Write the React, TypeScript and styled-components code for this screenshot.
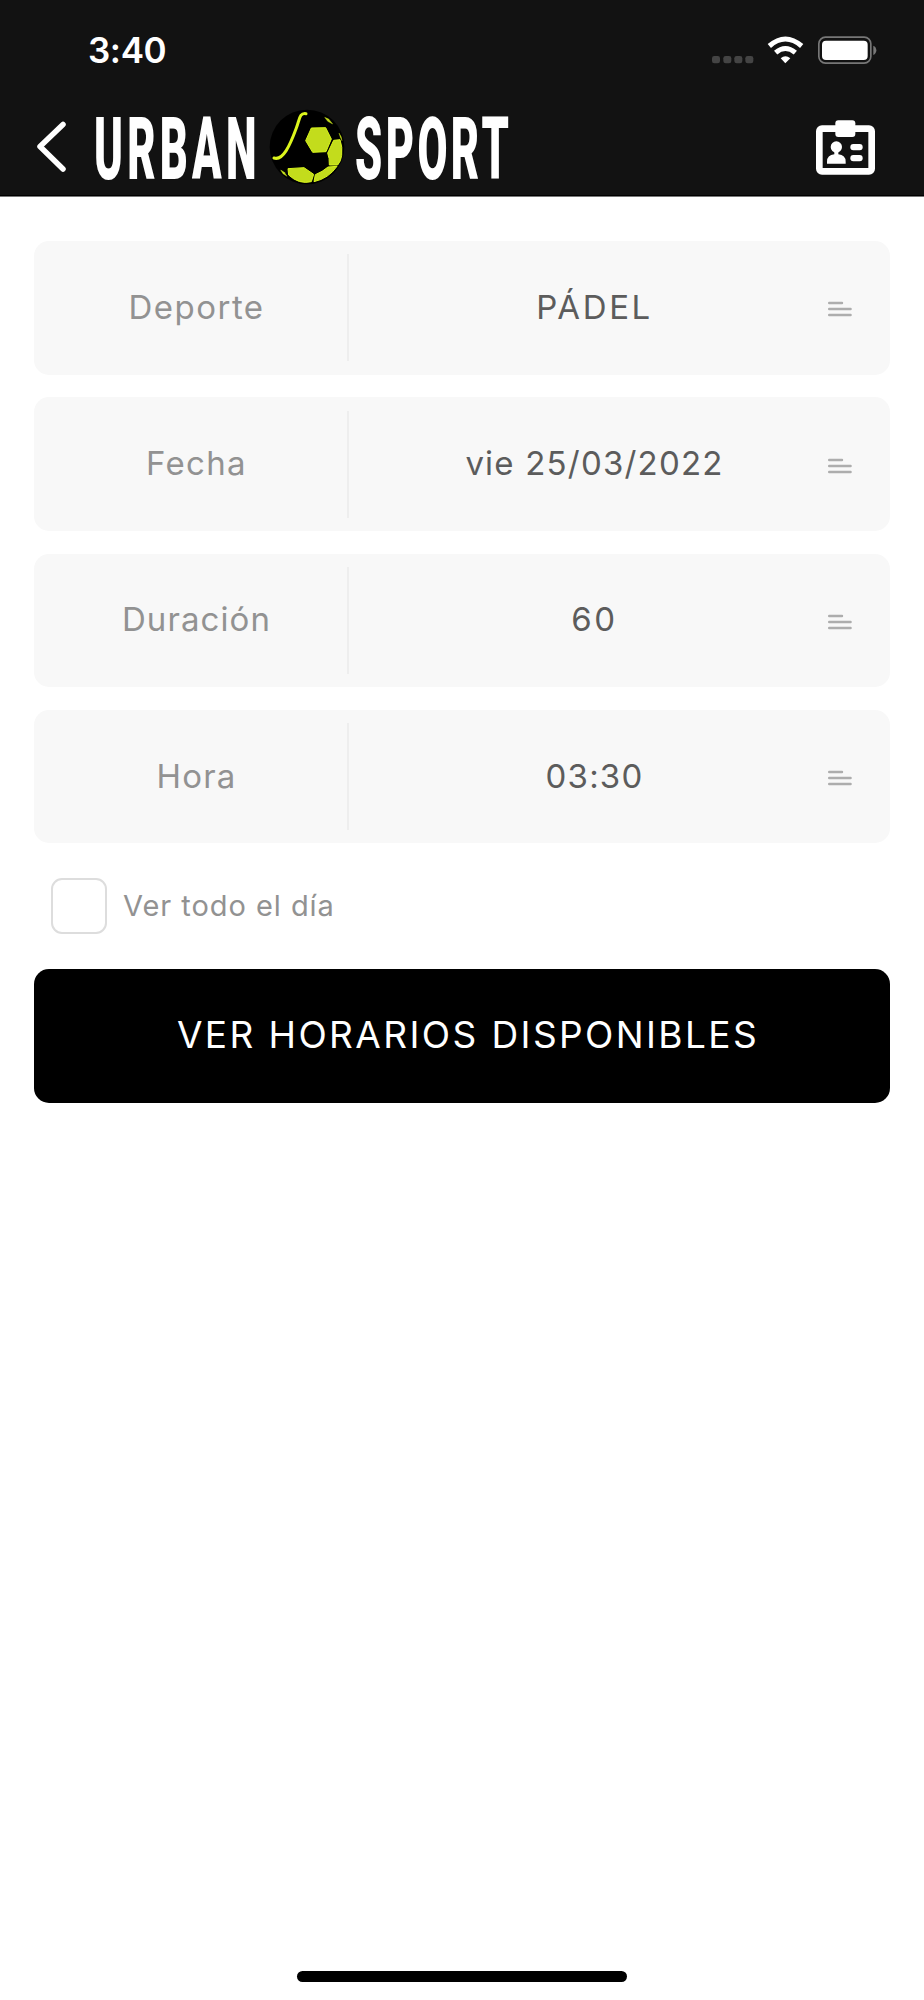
import React from 'react';
import styled, { createGlobalStyle } from 'styled-components';

const GlobalStyle = createGlobalStyle`
  *, *::before, *::after { box-sizing: border-box; }
  html, body { margin: 0; padding: 0; background: #fff; }
  body { font-family: Inter, "Liberation Sans", sans-serif; }
  button { font: inherit; border: 0; padding: 0; background: none; }
`;

const Screen = styled.div`
  width: 924px;
  height: 2000px;
  display: flex;
  flex-direction: column;
  background: #fff;
  overflow: hidden;
`;

const Header = styled.header`
  height: 197px;
  flex: none;
  background: #121212;
  border-bottom: 1px solid #777;
  box-shadow: inset 0 -1px 0 #000;
`;

const StatusBar = styled.div`
  height: 100px;
  padding: 0 45px 0 88px;
  display: flex;
  justify-content: space-between;
  align-items: center;
`;

const Clock = styled.time`
  color: #fff;
  font-size: 35px;
  line-height: 40px;
  font-weight: 600;
  letter-spacing: -0.4px;
`;

const NavBar = styled.nav`
  height: 96px;
  padding: 0 45px 0 34px;
  display: flex;
  align-items: center;
`;

const BackButton = styled.button`
  width: 36px;
  height: 60px;
  flex: none;
`;

const Logo = styled.div`
  margin-left: 24px;
  height: 86px;
  display: flex;
  align-items: center;
  flex: none;
`;

const LogoWord = styled.svg`
  display: block;
  overflow: visible;
  font-family: Roboto, sans-serif;
  font-weight: 900;
  font-size: 87px;
  fill: #fff;
`;

const Ball = styled.svg`
  display: block;
  margin: 0 10px 2px 12px;
`;

const CardButton = styled.button`
  width: 66px;
  height: 60px;
  margin-left: auto;
`;

const Form = styled.main`
  flex: 1;
  padding: 44px 34px 0;
  display: flex;
  flex-direction: column;
`;

const Fields = styled.div`
  display: flex;
  flex-direction: column;
  gap: 22.7px;
`;

const Field = styled.div`
  height: 133.6px;
  border-radius: 15px;
  background: #f8f8f8;
  display: flex;
  align-items: center;
  color: #5c5c5c;
  font-size: 33px;
  font-weight: 400;
  line-height: 40px;
`;

const FieldLabel = styled.div<{ $spacing: number }>`
  width: 313px;
  padding: 0 0 2px 12px;
  text-align: center;
  color: #929292;
  letter-spacing: ${(p) => p.$spacing}px;
`;

const Divider = styled.div`
  width: 2px;
  height: 107px;
  background: #eee;
`;

const FieldValue = styled.div<{ $spacing: number }>`
  width: 491px;
  padding-bottom: 2px;
  text-align: center;
  letter-spacing: ${(p) => p.$spacing}px;
`;

const MenuIcon = styled.svg`
  margin: 3px 0 0 -12px;
`;

const CheckRow = styled.label`
  margin: 34.5px 0 35px 17px;
  height: 56px;
  display: flex;
  align-items: center;
  gap: 16px;
  color: #929292;
  font-size: 29px;
  font-weight: 400;
  letter-spacing: 0.95px;
  line-height: 36px;
`;

const CheckBox = styled.span`
  width: 56px;
  height: 56px;
  border: 2px solid #ddd;
  border-radius: 11px;
`;

const Submit = styled.button`
  && {
    height: 134px;
    border-radius: 15px;
    background: #000;
    color: #fff;
    font-size: 37px;
    font-weight: 400;
    line-height: 44px;
    letter-spacing: 2.4px;
    padding: 0 0 2px 12px;
  }
`;

const HomeIndicator = styled.div`
  width: 330px;
  height: 11px;
  border-radius: 6px;
  background: #000;
  margin: 0 auto 18px;
`;

const fields = [
  { label: 'Deporte', labelSpacing: 1.5, value: 'PÁDEL', spacing: 2.6 },
  { label: 'Fecha', labelSpacing: 1.3, value: 'vie 25/03/2022', spacing: 1.2 },
  { label: 'Duración', labelSpacing: 1.1, value: '60', spacing: 2.6 },
  { label: 'Hora', labelSpacing: 1.2, value: '03:30', spacing: 1.2 },
];

const StatusIcons = () => (
  <svg width="168" height="32" viewBox="92 42 504 96">
    <g fill="#444">
      {[95, 129, 162, 195].map((x) => (
        <rect key={x} x={x} y="108" width="24" height="22" rx="7" />
      ))}
    </g>
    <g fill="none" stroke="#fff" strokeWidth="15">
      <path d="M267 78 Q315 36 364 78" />
      <path d="M286 98 Q315 73 345 98" />
    </g>
    <path d="M301 115 Q315 102 330 115 L315 130 Z" fill="#fff" />
    <rect x="415.500" y="51.500" width="156" height="78" rx="20" fill="#121212" stroke="#777" strokeWidth="5" />
    <rect x="425" y="62" width="137" height="58" rx="12" fill="#fff" />
    <path d="M579 77 Q588 81 588 91 Q588 101 579 105 Z" fill="#777" />
  </svg>
);

const UrbanSportLogo = () => (
  <Logo>
    <LogoWord width="163" height="86">
      <text transform="scale(.5 1)" x="0" y="73.500" textLength="325">URBAN</text>
    </LogoWord>
    <Ball width="76" height="76" viewBox="86 42 228 228">
      <circle cx="200" cy="156" r="112" fill="#000" />
      <path d="M197 56 C177 53 178 73 168 99 C149 151 128 198 101 189" fill="none" stroke="#dcf51c" strokeWidth="9" strokeLinecap="round" />
      <g fill="#c3dc1c" stroke="#d8f51a" strokeWidth="3" strokeLinejoin="round">
        <path d="M213 99 L256 98 L273 132 L257 170 L217 172 L196 137 Z" />
        <path d="M280 136 L299 134 Q307 156 304 181 Q302 199 292 210 L267 210 Q268 189 262 174 Z" />
        <path d="M143 221 L191 218 L220 238 L213 260 Q176 269 145 240 Z" />
        <path d="M225 239 Q246 231 263 216 L290 214 Q265 250 221 260 Z" />
        <path d="M253 67 L265 72 L277 87 L262 79 Z" strokeWidth="1" />
        <path d="M296 114 Q304 124 305 137 L300 127 Z" strokeWidth="1" />
        <path d="M121 225 L132 232 L140 244 L128 236 Z" strokeWidth="1" />
      </g>
    </Ball>
    <LogoWord width="155" height="86">
      <text transform="scale(.5 1)" x="0" y="73.500" textLength="308">SPORT</text>
    </LogoWord>
  </Logo>
);

export default function App() {
  return (
    <Screen>
      <GlobalStyle />
      <Header>
        <StatusBar>
          <Clock>3:40</Clock>
          <StatusIcons />
        </StatusBar>
        <NavBar>
          <BackButton aria-label="Volver">
            <svg width="36" height="60" viewBox="0 0 36 60" fill="none" stroke="#fff" strokeWidth="5.500" strokeLinecap="round" strokeLinejoin="round">
              <path d="M29 6.500 L6 28.500 L29 51" />
            </svg>
          </BackButton>
          <UrbanSportLogo />
          <CardButton aria-label="Carnet">
            <svg width="66" height="60" viewBox="400 293 198 180">
              <rect x="419" y="325" width="157" height="128" rx="8" fill="none" stroke="#fff" strokeWidth="20" />
              <rect x="467" y="300" width="60" height="50" rx="9" fill="#fff" />
              <circle cx="470" cy="380" r="17" fill="#fff" />
              <path d="M464 390 H476 V402 Q498 404 498 424 V430 H442 V424 Q442 404 464 402 Z" fill="#fff" />
              <rect x="512" y="371" width="37" height="19" rx="9" fill="#fff" />
              <rect x="512" y="404" width="37" height="19" rx="9" fill="#fff" />
            </svg>
          </CardButton>
        </NavBar>
      </Header>
      <Form>
        <Fields>
          {fields.map((f) => (
            <Field key={f.label}>
              <FieldLabel $spacing={f.labelSpacing}>{f.label}</FieldLabel>
              <Divider />
              <FieldValue $spacing={f.spacing}>{f.value}</FieldValue>
              <MenuIcon width="24" height="18" viewBox="0 0 24 18" stroke="#adadad" strokeWidth="2.400" strokeLinecap="round">
                <path d="M1.200 3 H14 M1.200 9 H22.600 M1.200 15 H22.600" />
              </MenuIcon>
            </Field>
          ))}
        </Fields>
        <CheckRow>
          <CheckBox />
          Ver todo el día
        </CheckRow>
        <Submit>VER HORARIOS DISPONIBLES</Submit>
      </Form>
      <HomeIndicator />
    </Screen>
  );
}
